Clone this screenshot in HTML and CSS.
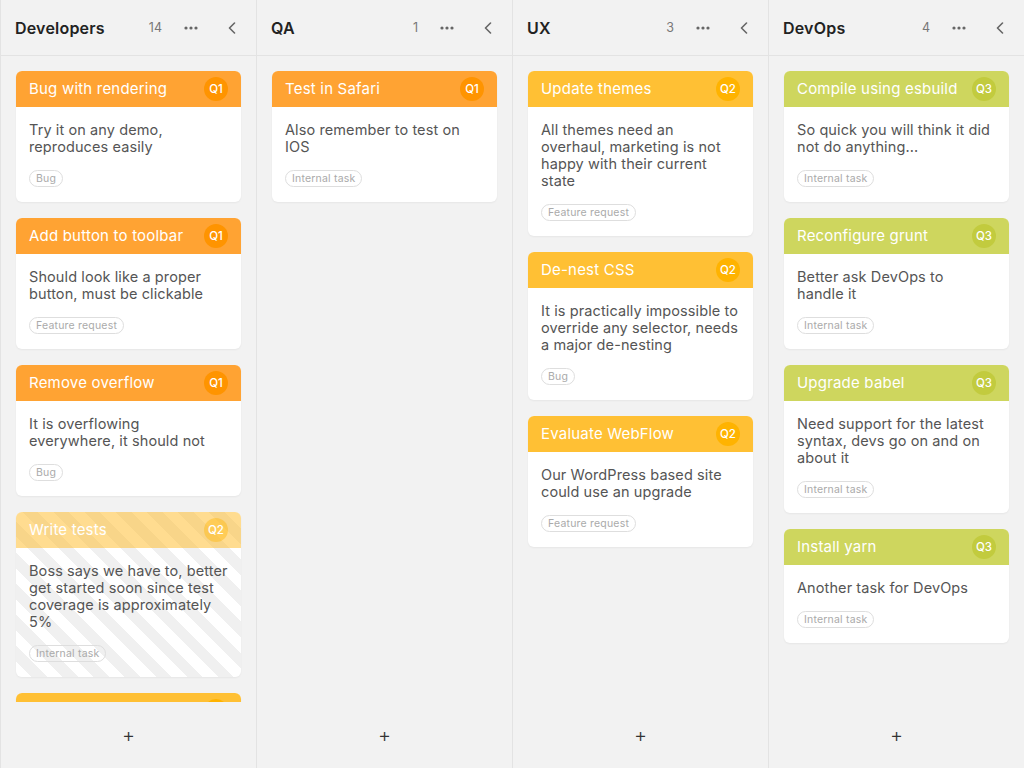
FILE: index.html
```html
<!DOCTYPE html>
<html lang="en">
<head>
<meta charset="utf-8">
<title>Task board</title>
<link rel="stylesheet" href="styles.css">
</head>
<body>
<div class="board">
  <section class="column">
    <header class="col-header">
      <h2 class="col-title">Developers</h2>
      <span class="col-count">14</span>
      <span class="col-menu"><svg width="14" height="4" viewBox="0 0 14 4"><circle cx="2" cy="2" r="1.6"/><circle cx="7" cy="2" r="1.6"/><circle cx="12" cy="2" r="1.6"/></svg></span>
      <span class="col-collapse"><svg width="8" height="12" viewBox="0 0 8 12"><path d="M6.5 1 L1.5 6 L6.5 11" fill="none" stroke-width="1.6" stroke-linecap="round" stroke-linejoin="round"/></svg></span>
    </header>
    <div class="col-body">
      <article class="card q1">
        <div class="card-head"><span class="card-title">Bug with rendering</span><span class="badge">Q1</span></div>
        <div class="card-body"><p class="card-text">Try it on any demo, reproduces easily</p><span class="tag">Bug</span></div>
      </article>
      <article class="card q1">
        <div class="card-head"><span class="card-title">Add button to toolbar</span><span class="badge">Q1</span></div>
        <div class="card-body"><p class="card-text">Should look like a proper button, must be clickable</p><span class="tag">Feature request</span></div>
      </article>
      <article class="card q1">
        <div class="card-head"><span class="card-title">Remove overflow</span><span class="badge">Q1</span></div>
        <div class="card-body"><p class="card-text">It is overflowing everywhere, it should not</p><span class="tag">Bug</span></div>
      </article>
      <article class="card q2 striped">
        <div class="card-head"><span class="card-title">Write tests</span><span class="badge">Q2</span></div>
        <div class="card-body"><p class="card-text">Boss says we have to, better get started soon since test coverage is approximately 5%</p><span class="tag">Internal task</span></div>
      </article>
      <article class="card q2 partial">
        <div class="card-head"><span class="badge"></span></div>
      </article>
    </div>
    <footer class="col-footer"><span class="add">+</span></footer>
  </section>

  <section class="column">
    <header class="col-header">
      <h2 class="col-title">QA</h2>
      <span class="col-count">1</span>
      <span class="col-menu"><svg width="14" height="4" viewBox="0 0 14 4"><circle cx="2" cy="2" r="1.6"/><circle cx="7" cy="2" r="1.6"/><circle cx="12" cy="2" r="1.6"/></svg></span>
      <span class="col-collapse"><svg width="8" height="12" viewBox="0 0 8 12"><path d="M6.5 1 L1.5 6 L6.5 11" fill="none" stroke-width="1.6" stroke-linecap="round" stroke-linejoin="round"/></svg></span>
    </header>
    <div class="col-body">
      <article class="card q1">
        <div class="card-head"><span class="card-title">Test in Safari</span><span class="badge">Q1</span></div>
        <div class="card-body"><p class="card-text">Also remember to test on IOS</p><span class="tag">Internal task</span></div>
      </article>
    </div>
    <footer class="col-footer"><span class="add">+</span></footer>
  </section>

  <section class="column">
    <header class="col-header">
      <h2 class="col-title">UX</h2>
      <span class="col-count">3</span>
      <span class="col-menu"><svg width="14" height="4" viewBox="0 0 14 4"><circle cx="2" cy="2" r="1.6"/><circle cx="7" cy="2" r="1.6"/><circle cx="12" cy="2" r="1.6"/></svg></span>
      <span class="col-collapse"><svg width="8" height="12" viewBox="0 0 8 12"><path d="M6.5 1 L1.5 6 L6.5 11" fill="none" stroke-width="1.6" stroke-linecap="round" stroke-linejoin="round"/></svg></span>
    </header>
    <div class="col-body">
      <article class="card q2">
        <div class="card-head"><span class="card-title">Update themes</span><span class="badge">Q2</span></div>
        <div class="card-body"><p class="card-text">All themes need an overhaul, marketing is not happy with their current state</p><span class="tag">Feature request</span></div>
      </article>
      <article class="card q2">
        <div class="card-head"><span class="card-title">De-nest CSS</span><span class="badge">Q2</span></div>
        <div class="card-body"><p class="card-text">It is practically impossible to override any selector, needs a major de-nesting</p><span class="tag">Bug</span></div>
      </article>
      <article class="card q2">
        <div class="card-head"><span class="card-title">Evaluate WebFlow</span><span class="badge">Q2</span></div>
        <div class="card-body"><p class="card-text">Our WordPress based site could use an upgrade</p><span class="tag">Feature request</span></div>
      </article>
    </div>
    <footer class="col-footer"><span class="add">+</span></footer>
  </section>

  <section class="column">
    <header class="col-header">
      <h2 class="col-title">DevOps</h2>
      <span class="col-count">4</span>
      <span class="col-menu"><svg width="14" height="4" viewBox="0 0 14 4"><circle cx="2" cy="2" r="1.6"/><circle cx="7" cy="2" r="1.6"/><circle cx="12" cy="2" r="1.6"/></svg></span>
      <span class="col-collapse"><svg width="8" height="12" viewBox="0 0 8 12"><path d="M6.5 1 L1.5 6 L6.5 11" fill="none" stroke-width="1.6" stroke-linecap="round" stroke-linejoin="round"/></svg></span>
    </header>
    <div class="col-body">
      <article class="card q3">
        <div class="card-head"><span class="card-title">Compile using esbuild</span><span class="badge">Q3</span></div>
        <div class="card-body"><p class="card-text">So quick you will think it did not do anything...</p><span class="tag">Internal task</span></div>
      </article>
      <article class="card q3">
        <div class="card-head"><span class="card-title">Reconfigure grunt</span><span class="badge">Q3</span></div>
        <div class="card-body"><p class="card-text">Better ask DevOps to<br>handle it</p><span class="tag">Internal task</span></div>
      </article>
      <article class="card q3">
        <div class="card-head"><span class="card-title">Upgrade babel</span><span class="badge">Q3</span></div>
        <div class="card-body"><p class="card-text">Need support for the latest syntax, devs go on and on about it</p><span class="tag">Internal task</span></div>
      </article>
      <article class="card q3">
        <div class="card-head"><span class="card-title">Install yarn</span><span class="badge">Q3</span></div>
        <div class="card-body"><p class="card-text">Another task for DevOps</p><span class="tag">Internal task</span></div>
      </article>
    </div>
    <footer class="col-footer"><span class="add">+</span></footer>
  </section>
</div>
</body>
</html>
```

FILE: styles.css
```css
* { box-sizing: border-box; }
html, body { margin: 0; padding: 0; height: 100%; }
body {
  font-family: Inter, "Noto Sans", "Liberation Sans", sans-serif;
  background: #f2f2f2;
  color: #555;
}
.board {
  display: grid;
  grid-template-columns: repeat(4, 1fr);
  height: 768px;
  overflow: hidden;
}
.column {
  display: flex;
  flex-direction: column;
  border-left: 1px solid #e3e3e3;
  min-width: 0;
  height: 768px;
}
.col-header {
  height: 56px;
  flex: 0 0 56px;
  display: flex;
  align-items: center;
  padding: 0 20px 0 14px;
  border-bottom: 1px solid #e3e3e3;
}
.col-title {
  margin: 0;
  flex: 1;
  font-size: 16px;
  font-weight: 600;
  letter-spacing: 0.2px;
  color: #222;
}
.col-count {
  font-size: 12.5px;
  color: #777;
  margin-right: 22px;
}
.col-menu svg { display: block; fill: #666; }
.col-menu { margin-right: 30px; }
.col-collapse svg { display: block; stroke: #666; }
.col-body {
  flex: 1;
  overflow: hidden;
  padding: 15px 15px 0 15px;
  display: flex;
  flex-direction: column;
  gap: 16px;
}
.card {
  flex: 0 0 auto;
  background: #fff;
  border-radius: 6px;
  overflow: hidden;
  box-shadow: 0 1px 2px rgba(0,0,0,0.05);
}
.card-head {
  height: 36px;
  display: flex;
  align-items: center;
  justify-content: space-between;
  padding: 0 13px 1px 13px;
  color: #fff;
}
.card-title { font-size: 15px; font-weight: 400; letter-spacing: 0.2px; }
.badge {
  width: 24px;
  height: 24px;
  border-radius: 50%;
  display: flex;
  align-items: center;
  justify-content: center;
  font-size: 11.5px;
  font-weight: 500;
  color: #fff;
}
.q1 .card-head { background: #ffa333; }
.q1 .badge { background: #ff9400; }
.q2 .card-head { background: #ffc034; }
.q2 .badge { background: #ffb300; }
.q3 .card-head { background: #ced65e; }
.q3 .badge { background: #c2cb3e; }
.card-body { padding: 14px 12.5px 15px 13px; }
.card-text {
  margin: 0 0 11px 0;
  font-size: 14.5px;
  line-height: 17px;
  letter-spacing: 0.1px;
  color: #555;
}
.tag {
  display: inline-block;
  height: 17px;
  line-height: 15px;
  padding: 0 6px;
  border: 1px solid #dedede;
  border-radius: 9px;
  font-size: 10.5px;
  letter-spacing: 0.2px;
  color: #aaa;
}
.striped {
  background: repeating-linear-gradient(45deg, #ffffff 0 11px, #f0f0f0 11px 22px);
}
.striped .card-head { background: rgba(255, 192, 52, 0.55); }
.striped .badge { background: rgba(255, 179, 0, 0.4); }
.partial { height: 40px; }
.partial .card-head { justify-content: flex-end; align-items: flex-start; padding-top: 6px; }
.col-footer {
  flex: 0 0 66px;
  display: flex;
  align-items: center;
  justify-content: center;
  padding-bottom: 1px;
}
.add {
  font-size: 20px;
  font-weight: 300;
  color: #333;
  line-height: 1;
}
```
